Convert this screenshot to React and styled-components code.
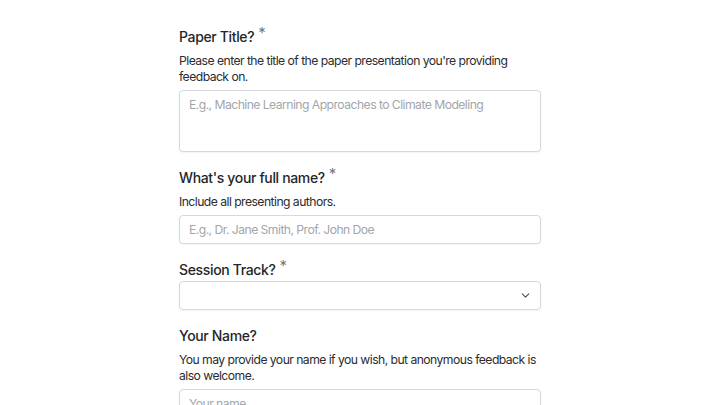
import React from "react";
import styled, { createGlobalStyle } from "styled-components";

const Global = createGlobalStyle`
  html, body { margin: 0; padding: 0; background: #ffffff; }
  body { font-family: Inter, "Noto Sans", sans-serif; }
  * { box-sizing: border-box; }
`;

const Page = styled.div`
  width: 362px;
  margin: 0 auto;
  padding-top: 27px;
  display: flex;
  flex-direction: column;
  gap: 16px;
`;

const Field = styled.div`
  display: flex;
  flex-direction: column;
`;

const Label = styled.label`
  font-size: 14px;
  line-height: 20px;
  font-weight: 500;
  letter-spacing: -0.35px;
  color: #24262a;
  margin-bottom: 1px;
`;

const Star = styled.span`
  display: inline-block;
  margin-left: 4px;
  font-size: 15px;
  font-weight: 400;
  color: #75797e;
  transform: translateY(-4px);
`;

const Desc = styled.p`
  margin: 5px 0 5px;
  font-size: 12.2px;
  letter-spacing: -0.55px;
  line-height: 16px;
  color: #2a2c30;
`;

const controlBase = `
  width: 100%;
  border: 1px solid #d6d8dc;
  border-radius: 4px;
  background: #fff;
  box-shadow: 0 1px 2px rgba(0,0,0,0.05);
  font-family: Inter, "Noto Sans", sans-serif;
  font-size: 12.2px;
  letter-spacing: -0.55px;
  color: #1f2328;
  padding: 0 9px;
  outline: none;
  &::placeholder { color: #a3a6ab; }
`;

const TextArea = styled.textarea`
  ${controlBase}
  height: 62px;
  padding-top: 5px;
  line-height: 18px;
  resize: none;
  display: block;
`;

const Input = styled.input`
  ${controlBase}
  height: 29px;
  display: block;
`;

const SelectBox = styled.div`
  ${controlBase}
  height: 29px;
  display: flex;
  align-items: center;
  justify-content: flex-end;
  padding-right: 8px;
  color: #4b5058;
`;

const Chevron = () => (
  <svg width="13" height="13" viewBox="0 0 24 24" fill="none" stroke="currentColor" strokeWidth="2" strokeLinecap="round" strokeLinejoin="round">
    <path d="M6 9l6 6 6-6" />
  </svg>
);

export default function App() {
  return (
    <>
      <Global />
      <Page>
        <Field>
          <Label>Paper Title?<Star>*</Star></Label>
          <Desc>Please enter the title of the paper presentation you're providing feedback on.</Desc>
          <TextArea placeholder="E.g., Machine Learning Approaches to Climate Modeling" />
        </Field>
        <Field>
          <Label>What's your full name?<Star>*</Star></Label>
          <Desc>Include all presenting authors.</Desc>
          <Input placeholder="E.g., Dr. Jane Smith, Prof. John Doe" />
        </Field>
        <Field>
          <Label>Session Track?<Star>*</Star></Label>
          <SelectBox><Chevron /></SelectBox>
        </Field>
        <Field>
          <Label>Your Name?</Label>
          <Desc>You may provide your name if you wish, but anonymous feedback is also welcome.</Desc>
          <Input placeholder="Your name" />
        </Field>
      </Page>
    </>
  );
}
